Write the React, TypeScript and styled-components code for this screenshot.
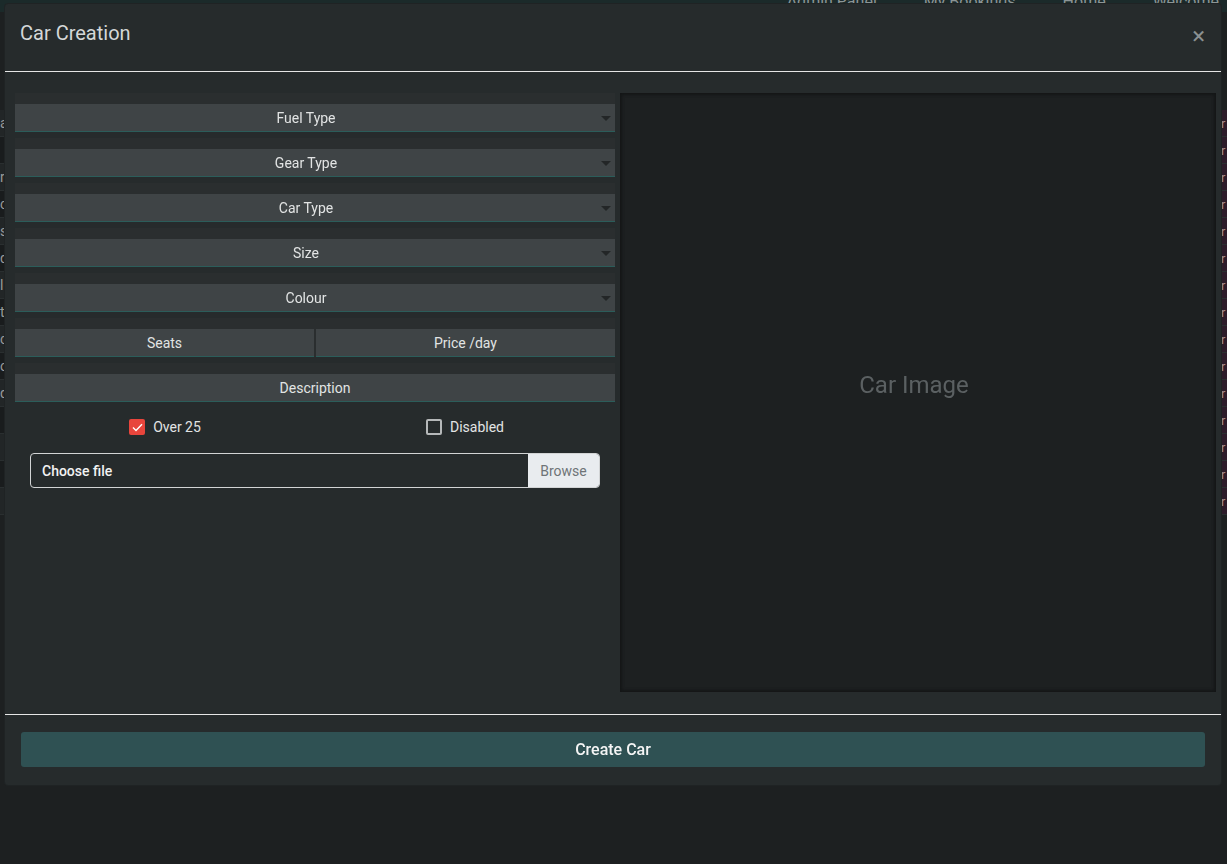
import React from 'react'
import styled, { createGlobalStyle } from 'styled-components'

const GlobalStyle = createGlobalStyle`
  html, body {
    margin: 0;
    padding: 0;
    background: #1d2021;
    font-family: Roboto, "Liberation Sans", sans-serif;
    overflow: hidden;
  }
`

const Page = styled.div`
  width: 1227px;
  height: 864px;
  background: #1d2021;
`

const NavBar = styled.nav`
  height: 12px;
  background: #1b2a2a;
  display: flex;
  justify-content: flex-end;
  align-items: flex-end;
  gap: 47px;
  padding-right: 8px;
  overflow: hidden;
`

const NavLink = styled.span`
  font-size: 16px;
  line-height: 12px;
  color: #8c9596;
  transform: translateY(-4px);
`

const Table = styled.div`
  margin-top: 98px;
  display: flex;
  flex-direction: column;
`

const TableRow = styled.div<{ $alt?: boolean }>`
  height: 26px;
  display: flex;
  justify-content: space-between;
  align-items: center;
  background: ${({ $alt }) => ($alt ? '#191c1d' : '#222627')};
  border-bottom: 1px solid #2a2f30;
  font-size: 14px;
  color: #9a9a9a;
`

const RowEnd = styled.span`
  width: 6px;
  height: 100%;
  background: #2d1c2a;
  color: #aa8f8f;
  display: flex;
  align-items: center;
  font-size: 13px;
`

const Modal = styled.div`
  position: fixed;
  left: 4px;
  top: 3px;
  width: 1218px;
  background: #262b2c;
  border: 1px solid #1f2324;
  border-radius: 4px;
  box-sizing: border-box;
  display: flex;
  flex-direction: column;
`

const Header = styled.div`
  height: 68px;
  padding: 14px 16px 0 15px;
  box-sizing: border-box;
  display: flex;
  align-items: flex-start;
  justify-content: space-between;
  border-bottom: 1px solid #e6e6e6;
`

const Title = styled.h5`
  margin: 0;
  font-size: 20px;
  line-height: 30px;
  font-weight: 400;
  color: #d4d7d8;
`

const Close = styled.span`
  font-size: 24px;
  font-weight: 400;
  color: #8a9091;
  margin-top: 6px;
  line-height: 1;
`

const Body = styled.div`
  padding: 21px 6px 22px 10px;
  display: grid;
  grid-template-columns: 600px 596px;
  gap: 5px;
  border-bottom: 1px solid #e6e6e6;
`

const FormColumn = styled.div`
  display: flex;
  flex-direction: column;
`

const Group = styled.div`
  padding-top: 11px;
  margin-bottom: 6px;
  background: #2a2e2f;
  display: flex;
  gap: 2px;
`

const SelectBox = styled.div`
  position: relative;
  flex: 1;
  height: 28px;
  box-sizing: border-box;
  background: #3f4446;
  border-bottom: 1px solid #2b5d5a;
  display: flex;
  align-items: center;
  justify-content: center;
  padding-right: 18px;
  font-size: 14px;
  color: #e2e4e4;

  &::after {
    content: '';
    position: absolute;
    right: 4px;
    top: 12px;
    border-left: 5px solid transparent;
    border-right: 5px solid transparent;
    border-top: 5px solid #232627;
  }
`

const InputBox = styled.div`
  flex: 1;
  height: 28px;
  box-sizing: border-box;
  background: #3f4446;
  border-bottom: 1px solid #2b5d5a;
  display: flex;
  align-items: center;
  justify-content: center;
  font-size: 14px;
  color: #e2e4e4;
`

const CheckRow = styled.div`
  display: grid;
  grid-template-columns: 1fr 1fr;
  margin-top: 2px;
  height: 34px;
  align-items: center;
`

const CheckLabel = styled.label`
  display: flex;
  justify-content: center;
  align-items: center;
  gap: 8px;
  font-size: 14px;
  color: #e2e4e4;
`

const Box = styled.span<{ $checked?: boolean }>`
  width: 16px;
  height: 16px;
  box-sizing: border-box;
  border-radius: 2px;
  display: flex;
  align-items: center;
  justify-content: center;
  background: ${({ $checked }) => ($checked ? '#e8453c' : 'transparent')};
  border: ${({ $checked }) => ($checked ? 'none' : '2px solid #b5b8b9')};
`

const FileInput = styled.div`
  margin: 9px 15px 0 15px;
  height: 35px;
  box-sizing: border-box;
  border: 1px solid #d2d4d5;
  border-radius: 4px;
  display: flex;
  overflow: hidden;
`

const FileLabel = styled.span`
  flex: 1;
  padding-left: 11px;
  display: flex;
  align-items: center;
  font-size: 14px;
  font-weight: 500;
  color: #f2f2f2;
`

const Browse = styled.span`
  width: 71px;
  background: #e9ecef;
  color: #6f7477;
  font-size: 14px;
  display: flex;
  align-items: center;
  justify-content: center;
`

const ImageBox = styled.div`
  height: 599px;
  box-sizing: border-box;
  padding: 0 8px 16px 0;
  background: #1d2021;
  box-shadow: inset 0 0 3px 2px #141617;
  display: flex;
  align-items: center;
  justify-content: center;
  font-size: 24px;
  color: #5b6062;
`

const Footer = styled.div`
  padding: 17px 16px 18px 16px;
`

const CreateButton = styled.button`
  width: 100%;
  height: 35px;
  border: none;
  border-radius: 3px;
  background: #2f5153;
  color: #f4f4f4;
  font-family: Roboto, "Liberation Sans", sans-serif;
  font-size: 16px;
  font-weight: 500;
`

function Check() {
  return (
    <svg width="11" height="9" viewBox="0 0 11 9">
      <path d="M1 4.6 L4 7.6 L10 1.2" fill="none" stroke="#ffffff" strokeWidth="1.4" />
    </svg>
  )
}

const selects = ['Fuel Type', 'Gear Type', 'Car Type', 'Size', 'Colour']
const tableRows = ['a', '', 'r', 'c', 's', 'd', 'l', 't', 'c', 'o', 'd', '', '', '', '']

export default function App() {
  return (
    <Page>
      <GlobalStyle />
      <NavBar>
        <NavLink>Admin Panel</NavLink>
        <NavLink>My Bookings</NavLink>
        <NavLink>Home</NavLink>
        <NavLink>Welcome</NavLink>
      </NavBar>
      <Table>
        {tableRows.map((ch, i) => (
          <TableRow key={i} $alt={i % 2 === 1}>
            <span>{ch}</span>
            <RowEnd>r</RowEnd>
          </TableRow>
        ))}
      </Table>

      <Modal>
        <Header>
          <Title>Car Creation</Title>
          <Close>×</Close>
        </Header>
        <Body>
          <FormColumn>
            {selects.map((s) => (
              <Group key={s}>
                <SelectBox>{s}</SelectBox>
              </Group>
            ))}
            <Group>
              <InputBox>Seats</InputBox>
              <InputBox>Price /day</InputBox>
            </Group>
            <Group>
              <InputBox>Description</InputBox>
            </Group>
            <CheckRow>
              <CheckLabel>
                <Box $checked><Check /></Box>
                Over 25
              </CheckLabel>
              <CheckLabel>
                <Box />
                Disabled
              </CheckLabel>
            </CheckRow>
            <FileInput>
              <FileLabel>Choose file</FileLabel>
              <Browse>Browse</Browse>
            </FileInput>
          </FormColumn>
          <ImageBox>Car Image</ImageBox>
        </Body>
        <Footer>
          <CreateButton>Create Car</CreateButton>
        </Footer>
      </Modal>
    </Page>
  )
}
